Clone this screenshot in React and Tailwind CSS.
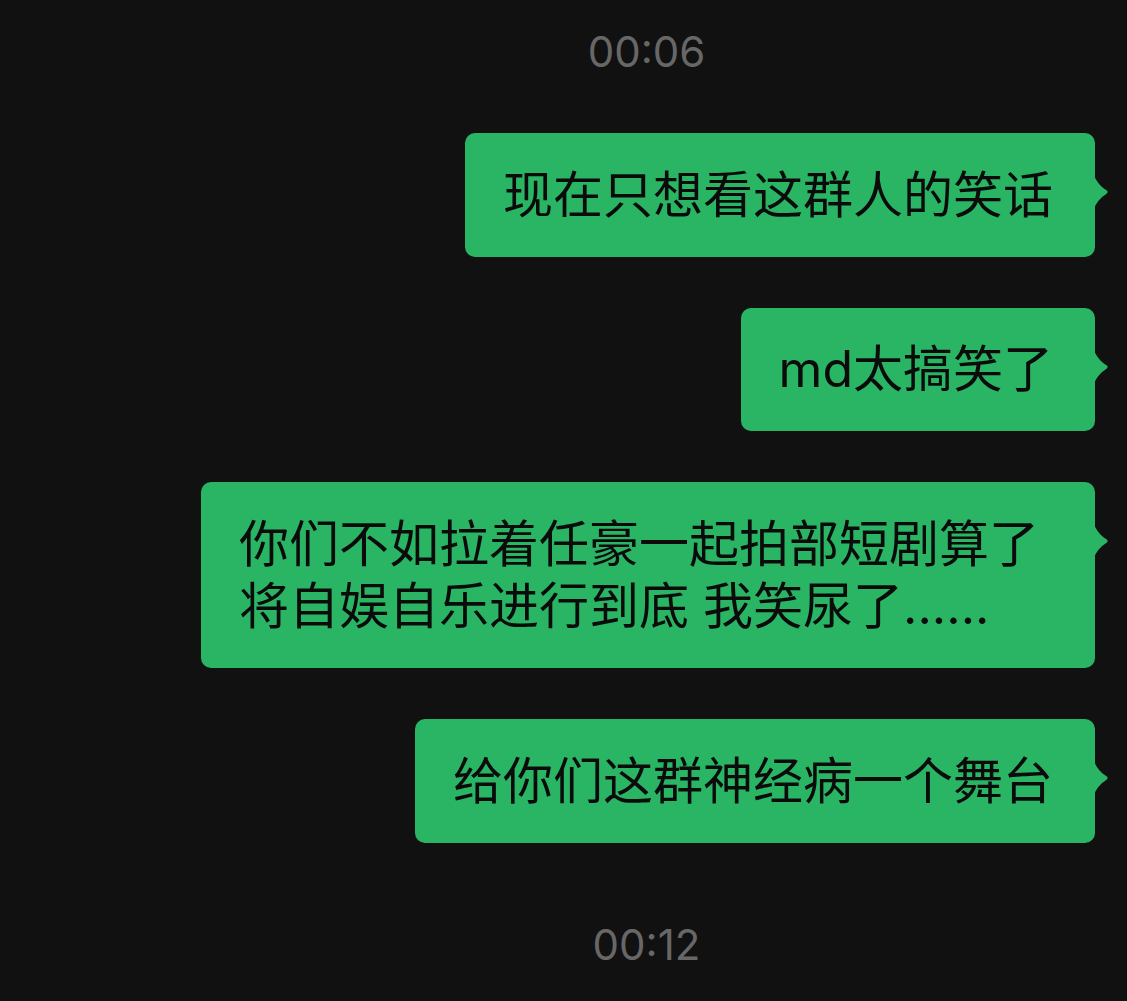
import React from 'react';

const messages = [
  '现在只想看这群人的笑话',
  'md太搞笑了',
  '你们不如拉着任豪一起拍部短剧算了将自娱自乐进行到底 我笑尿了......',
  '给你们这群神经病一个舞台',
];

const Timestamp = ({ time }) => (
  <div className="flex justify-center pl-[166px]">
    <span className="text-[42px] leading-[50px] text-[#676767] font-['Inter','Noto_Sans_CJK_SC',sans-serif]">
      {time}
    </span>
  </div>
);

const Bubble = ({ text }) => (
  <div className="flex justify-end pr-[32px]">
    <div className="relative max-w-[894px] rounded-[10px] bg-[#2ab565] pl-[38px] pr-[42px] py-[30.5px]">
      <p className="text-[50px] leading-[62.5px] text-[#0b0b0b] font-['Inter','Noto_Sans_CJK_SC',sans-serif]">
        {text}
      </p>
      {/* little pointer on the right edge */}
      <svg
        className="absolute top-[42px] right-[-15px]"
        width="16"
        height="34"
        viewBox="0 0 16 34"
      >
        <path
          d="M0 0 C2 6 6 11 12.5 15.3 Q14.8 17 12.5 18.7 C6 23 2 28 0 34 Z"
          fill="#2ab565"
        />
      </svg>
    </div>
  </div>
);

export default function App() {
  return (
    <div className="w-[1127px] h-[1001px] overflow-hidden bg-[#111111] pt-[27px]">
      <Timestamp time="00:06" />
      <div className="mt-[56px] flex flex-col gap-[51px]">
        {messages.map((m, i) => (
          <Bubble key={i} text={m} />
        ))}
      </div>
      <div className="mt-[77px]">
        <Timestamp time="00:12" />
      </div>
    </div>
  );
}
